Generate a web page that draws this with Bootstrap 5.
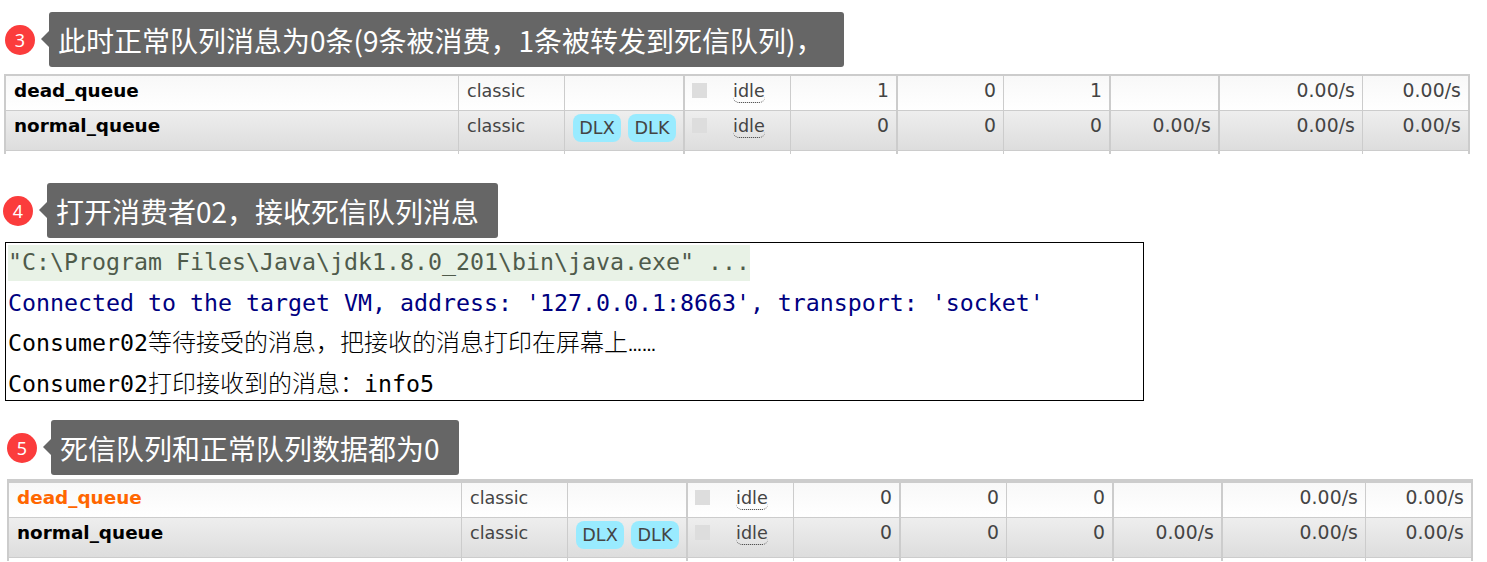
<!DOCTYPE html>
<html lang="zh">
<head>
<meta charset="utf-8">
<title>队列</title>
<link href="https://cdn.jsdelivr.net/npm/bootstrap@5.3.0/dist/css/bootstrap.min.css" rel="stylesheet">
<style>
body{background:#fff;margin:0;overflow:hidden}
.note-row{gap:14px;height:55px}
.nr1{margin:12px 0 0 5px}
.nr2{margin:29px 0 0 3px}
.nr3{margin:19px 0 0 7px}
.num-dot{width:30px;height:30px;border-radius:50%;background:#fb3c3c;color:#fff;font:18px/30px "Noto Sans",sans-serif;text-align:center;flex:none}
.note-bubble{position:relative;height:55px;background:#666;color:#fff;border-radius:3px;padding:0 9px;font:28px/56px "Noto Sans CJK SC","Noto Sans",sans-serif;white-space:nowrap}
.nb1{width:795px}
.nb2{width:451px}
.nb3{width:408px}
.note-bubble::before{content:"";position:absolute;left:-8px;top:19px;border:8px solid transparent;border-left:0;border-right-color:#666}
.qtab{table-layout:fixed;width:1466px;border-collapse:separate;border-spacing:0;font:17.6px/24px "DejaVu Sans",Verdana,sans-serif;color:#444}
.qt1{margin:7px 0 0 4px}
.qt2{margin:4px 0 0 7px}
.qtab td{border-right:1px solid #ccc;border-bottom:1px solid #ccc;border-top:0;padding:3px 8px;vertical-align:top;white-space:nowrap;overflow:hidden}
.qtab td:first-child{border-left:2px solid #ccc}
.qtab td.gb{border-right-width:2px}
.qtab td:last-child{border-right-width:2px}
.qtab tr.ra td{background:linear-gradient(#f8f8f8,#fff);padding-top:3px;border-top:2px solid #ccc;height:37px}
.qt2 tr.ra td{border-top-width:4px;height:39px}
.qtab tr.rb td{height:40px;background:linear-gradient(#eee,#ddd)}
.qtab tr.rc td{height:3px;padding:0;border-bottom:0;font-size:0;line-height:0}
.qtab td.qname{font-weight:700;color:#000;font-size:18.4px}
.qtab td.qname-hot{color:#f60}
.qtab td.r-num{text-align:right;font-size:18.8px;padding-right:7px;letter-spacing:.1px}
.st-cell{display:flex;align-items:flex-start}
.st-box{width:15px;height:15px;background:#ddd;margin:4px 26px 0 -1px;flex:none}
.st-idle{border-bottom:1px dotted #333;border-radius:0 0 6px 6px;line-height:24px;height:24px}
.tag-dlx{display:inline-block;height:28px;width:48px;line-height:29px;background:#99ebff;border-radius:8px;text-align:center;color:#444;margin:0 7px 0 0}
.qtab td.tagc{padding:3px 0 0 8px}
.term{width:1139px;height:159px;margin:4px 0 0 5px;border:1px solid #000;padding:2px;font:23.25px/34px "DejaVu Sans Mono","Noto Sans CJK SC",monospace;color:#000}
.term-l{white-space:nowrap;height:40.5px}
.term-h{display:inline-block;height:36px;line-height:34px;width:742px;background:#e8f2e6;color:#4f5b4b;vertical-align:top}
.term-b{color:#000080}
.term-c{font:300 24px/24px "Noto Sans CJK SC",sans-serif}
.term-e{font:700 14px/14px "Liberation Sans",sans-serif}
.c1{width:455px}.c2{width:106px}.c3{width:120px}.c4{width:106px}.c5{width:107px}.c6{width:106px}.c7{width:107px}.c8{width:109px}.c9{width:143px}.c10{width:107px}
</style>
</head>
<body>
<div class="d-flex align-items-center note-row nr1"><div class="num-dot">3</div><div class="note-bubble nb1">此时正常队列消息为0条(9条被消费，1条被转发到死信队列)，</div></div>
<table class="qtab qt1">
<colgroup><col class="c1"><col class="c2"><col class="c3"><col class="c4"><col class="c5"><col class="c6"><col class="c7"><col class="c8"><col class="c9"><col class="c10"></colgroup>
<tr class="ra"><td class="qname">dead_queue</td><td>classic</td><td class="gb"></td><td><div class="st-cell"><span class="st-box"></span><span class="st-idle">idle</span></div></td><td class="r-num gb">1</td><td class="r-num">0</td><td class="r-num gb">1</td><td class="gb"></td><td class="r-num">0.00/s</td><td class="r-num">0.00/s</td></tr>
<tr class="rb"><td class="qname">normal_queue</td><td>classic</td><td class="gb tagc"><span class="tag-dlx">DLX</span><span class="tag-dlx">DLK</span></td><td><div class="st-cell"><span class="st-box"></span><span class="st-idle">idle</span></div></td><td class="r-num gb">0</td><td class="r-num">0</td><td class="r-num gb">0</td><td class="r-num gb">0.00/s</td><td class="r-num">0.00/s</td><td class="r-num">0.00/s</td></tr>
<tr class="rc"><td></td><td></td><td class="gb"></td><td></td><td class="gb"></td><td></td><td class="gb"></td><td class="gb"></td><td></td><td></td></tr>
</table>
<div class="d-flex align-items-center note-row nr2"><div class="num-dot">4</div><div class="note-bubble nb2">打开消费者02，接收死信队列消息</div></div>
<div class="term">
<div class="term-l"><span class="term-h">"C:\Program Files\Java\jdk1.8.0_201\bin\java.exe" ...</span></div>
<div class="term-l term-b">Connected to the target VM, address: '127.0.0.1:8663', transport: 'socket'</div>
<div class="term-l">Consumer02<span class="term-c">等待接受的消息，把接收的消息打印在屏幕上<span class="term-e">……</span></span></div>
<div class="term-l">Consumer02<span class="term-c">打印接收到的消息：</span>info5</div>
</div>
<div class="d-flex align-items-center note-row nr3"><div class="num-dot">5</div><div class="note-bubble nb3">死信队列和正常队列数据都为0</div></div>
<table class="qtab qt2">
<colgroup><col class="c1"><col class="c2"><col class="c3"><col class="c4"><col class="c5"><col class="c6"><col class="c7"><col class="c8"><col class="c9"><col class="c10"></colgroup>
<tr class="ra"><td class="qname qname-hot">dead_queue</td><td>classic</td><td class="gb"></td><td><div class="st-cell"><span class="st-box"></span><span class="st-idle">idle</span></div></td><td class="r-num gb">0</td><td class="r-num">0</td><td class="r-num gb">0</td><td class="gb"></td><td class="r-num">0.00/s</td><td class="r-num">0.00/s</td></tr>
<tr class="rb"><td class="qname">normal_queue</td><td>classic</td><td class="gb tagc"><span class="tag-dlx">DLX</span><span class="tag-dlx">DLK</span></td><td><div class="st-cell"><span class="st-box"></span><span class="st-idle">idle</span></div></td><td class="r-num gb">0</td><td class="r-num">0</td><td class="r-num gb">0</td><td class="r-num gb">0.00/s</td><td class="r-num">0.00/s</td><td class="r-num">0.00/s</td></tr>
<tr class="rc"><td></td><td></td><td class="gb"></td><td></td><td class="gb"></td><td></td><td class="gb"></td><td class="gb"></td><td></td><td></td></tr>
</table>
</body>
</html>
